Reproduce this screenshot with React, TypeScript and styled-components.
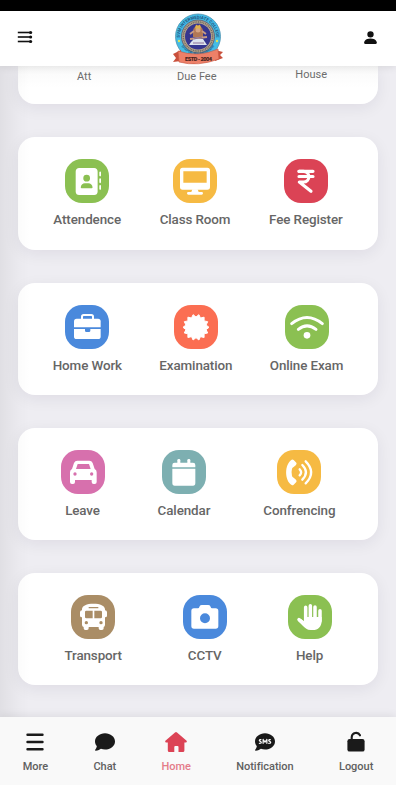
import React from "react";
import styled, { createGlobalStyle } from "styled-components";
import { FaAddressBook, FaComment, FaCommentSms } from "react-icons/fa6";
import { BsPersonFill } from "react-icons/bs";

const GlobalStyle = createGlobalStyle`
  * { box-sizing: border-box; }
  body { margin: 0; background: #fff; font-family: Roboto, "Liberation Sans", sans-serif; }
`;

const Screen = styled.div`
  position: relative;
  width: 396px;
  height: 785px;
  overflow: hidden;
  display: flex;
  flex-direction: column;
  background: #eeedf2;
`;

const EdgeShade = styled.div`
  position: absolute;
  inset: 11px auto 0 0;
  width: 30px;
  background: linear-gradient(90deg, rgba(0, 0, 0, 0.06), rgba(0, 0, 0, 0.015) 60%, transparent);
  pointer-events: none;
`;

const StatusBar = styled.div`
  height: 11px;
  flex: none;
  background: #000;
`;

const Header = styled.header`
  height: 55px;
  flex: none;
  display: grid;
  grid-template-columns: 1fr 52px 1fr;
  align-items: center;
  padding: 0 17px;
  background: #fff;
  box-shadow: 0 1px 8px rgba(0, 0, 0, 0.1);
  z-index: 1;
  color: #111;
`;

const HeaderStart = styled.div`
  display: flex;
  padding-bottom: 3px;
`;

const HeaderEnd = styled(HeaderStart)`
  justify-content: flex-end;
`;

const Main = styled.main`
  flex: 1;
  min-height: 0;
  display: flex;
  flex-direction: column;
  gap: 33px;
  padding: 0 18px;
`;

const Card = styled.section`
  height: 112.2px;
  flex: none;
  display: flex;
  justify-content: space-around;
  align-items: flex-start;
  padding: 22px 16px 0;
  border-radius: 17px;
  background: #fff;
  box-shadow: 0 4px 16px rgba(30, 20, 60, 0.07);
`;

const SummaryCard = styled(Card)`
  height: 38.4px;
  padding: 4px 51px 0 59px;
  justify-content: flex-start;
  border-radius: 0 0 17px 17px;
  background: linear-gradient(#f9f9f9, #fff 22px);
`;

const Summary = styled.span<{ $raised?: boolean }>`
  font-size: 11px;
  line-height: 14px;
  color: #6d6d6d;
  margin-top: ${(p) => (p.$raised ? -2 : 0)}px;
  & + & { margin-left: auto; }
  &:nth-child(2) { padding-left: 7px; }
`;

const Tile = styled.a`
  display: flex;
  flex-direction: column;
  align-items: center;
`;

const Badge = styled.span<{ $color: string }>`
  width: 44px;
  height: 44px;
  display: grid;
  place-items: center;
  border-radius: 17px;
  background: ${(p) => p.$color};
  color: #fff;
`;

const TileLabel = styled.span`
  margin-top: 8px;
  font-size: 13.4px;
  line-height: 17px;
  font-weight: 500;
  letter-spacing: -0.1px;
  color: #666;
  white-space: nowrap;
`;

const Nav = styled.nav`
  height: 68.5px;
  flex: none;
  display: flex;
  justify-content: space-around;
  background: #f9f9f9;
  box-shadow: 0 -2px 8px rgba(0, 0, 0, 0.07);
  z-index: 1;
`;

const NavItem = styled.a<{ $active?: boolean }>`
  display: flex;
  flex-direction: column;
  align-items: center;
  padding-top: 14px;
  color: ${(p) => (p.$active ? "#dc4355" : "#1a1a1a")};
`;

const NavIcon = styled.span`
  height: 22px;
  display: grid;
  place-items: center;
`;

const NavLabel = styled.span<{ $active?: boolean }>`
  margin-top: 7px;
  font-size: 11px;
  line-height: 14px;
  font-weight: 500;
  letter-spacing: -0.02px;
  color: ${(p) => (p.$active ? "#e47c89" : "#606060")};
`;

const MenuIcon = () => (
  <svg width="16" height="14" viewBox="0 0 16 14" fill="#111">
    {[2.5, 7, 11.5].map((y) => (
      <g key={y}>
        <rect x="0.8" y={y - 0.8} width="12" height="1.6" />
        <circle cx="13.6" cy={y} r="1.6" />
      </g>
    ))}
  </svg>
);

/* Badge artwork shares one 132-unit square, three units per pixel. */
const Art = ({ children }: { children: React.ReactNode }) => (
  <svg width="44" height="44" viewBox="0 0 132 132" fill="currentColor">{children}</svg>
);

const stroke = { fill: "none", stroke: "currentColor", strokeLinecap: "round", strokeLinejoin: "round" } as const;

const Desktop = () => (
  <Art>
    <path fillRule="evenodd" d="M29 26H103Q111 26 111 34V84Q111 92 103 92H29Q21 92 21 84V34Q21 26 29 26ZM31 37V71H101V37Z" />
    <path d="M58 91H74L77 99H86Q90 99 90 103Q90 107 86 107H46Q42 107 42 103Q42 99 46 99H55Z" />
  </Art>
);

const Rupee = () => (
  <Art>
    <g {...stroke} strokeWidth="9.5">
      <path d="M45 37H87M45 52.5H87" />
      <path d="M45 37H58C80 37 80 69 58 69H46L81 97" />
    </g>
  </Art>
);

const Briefcase = () => (
  <Art>
    <path {...stroke} strokeWidth="6" d="M51 43V35Q51 30 56 30H79Q84 30 84 35V43" />
    <path d="M35 41H99Q107 41 107 49V67H27V49Q27 41 35 41Z" />
    <path d="M27 72H60V77Q60 81 64 81H72Q76 81 76 77V72H107V95Q107 102 99 102H35Q27 102 27 95Z" />
  </Art>
);

const BURST = Array.from({ length: 28 }, (_, i) => {
  const r = i % 2 ? 31 : 39;
  const a = ((i + 1) * Math.PI) / 14;
  return `${(66 + r * Math.sin(a)).toFixed(2)},${(67 - r * Math.cos(a)).toFixed(2)}`;
}).join(" ");

const Burst = () => (
  <Art><polygon points={BURST} stroke="currentColor" strokeWidth="3" strokeLinejoin="round" /></Art>
);

const Wifi = () => (
  <Art>
    <path {...stroke} strokeWidth="9" d="M20 56Q66 19 112 56M40 73Q66 52 93 73" />
    <circle cx="66" cy="91" r="10" />
  </Art>
);

const Car = () => (
  <Art>
    <path fillRule="evenodd" d="M49 32H85Q92 32 95 39L101 57Q107 60 107 67V96Q107 102 101 102H98Q92 102 92 96V90H42V96Q42 102 36 102H33Q27 102 27 96V67Q27 60 33 57L39 39Q42 32 49 32ZM50 42L45 57H89L84 42ZM42 67A5 5 0 1 0 42 77A5 5 0 1 0 42 67ZM92 67A5 5 0 1 0 92 77A5 5 0 1 0 92 67Z" />
  </Art>
);

const Calendar = () => (
  <Art>
    <rect x="46" y="27" width="9" height="20" rx="4" />
    <rect x="76" y="27" width="9" height="20" rx="4" />
    <path d="M38 38H93Q100 38 100 45V52H31V45Q31 38 38 38ZM31 56H100V99Q100 107 93 107H38Q31 107 31 99Z" />
  </Art>
);

const PhoneVolume = () => (
  <Art>
    <path d="M44 29Q47 27 50 30L58 38Q60 41 57 45L50 51Q46 53 45 56Q42 67 45 78Q46 81 50 83L57 89Q60 93 58 96L50 104Q47 107 44 105C22 91 22 43 44 29Z" />
    <path {...stroke} strokeWidth="7" d="M68 58Q77 67 68 76M76 45Q98 67 76 89M86 34Q119 67 86 100" />
  </Art>
);

const Bus = () => (
  <Art>
    <path fillRule="evenodd" d="M67 26C88 26 101 32 102 42V46Q108 46 108 52V62Q108 67 102 67V89Q102 94 98 96V100Q98 105 93 105H88Q83 105 83 100V96H53V100Q53 105 48 105H43Q38 105 38 100V96Q33 94 33 89V67Q27 67 27 62V52Q27 46 33 46V42C34 32 47 26 67 26ZM53 36V40H82V36ZM46 47Q42 47 42 51V66Q42 70 46 70H65V47ZM70 47V70H89Q93 70 93 66V51Q93 47 89 47ZM46 78A5 5 0 1 0 46 88A5 5 0 1 0 46 78ZM90 78A5 5 0 1 0 90 88A5 5 0 1 0 90 78Z" />
  </Art>
);

const Camera = () => (
  <Art>
    <path fillRule="evenodd" d="M33 40H45Q48 40 49 36Q50 30 56 30H76Q82 30 83 36Q84 40 87 40H98Q106 40 106 48V93Q106 101 98 101H33Q25 101 25 93V48Q25 40 33 40ZM66 55A15 15 0 1 0 66 85A15 15 0 1 0 66 55Z" />
  </Art>
);

const Hand = () => (
  <Art>
    <path {...stroke} strokeWidth="10.5" d="M53 37V78M67 32V78M81 36V78M96 47V78M33 74L53 90" />
    <path d="M48 66H101V77C101 94 91 105 74 105H68C57 105 52 100 45 93L31 79L38 71L48 79Z" />
  </Art>
);

const Bars = () => (
  <svg width="20" height="20" viewBox="0 0 20 20">
    <path {...stroke} strokeWidth="2.4" d="M2.5 2.8H17.5M2.5 10H17.5M2.5 17.2H17.5" />
  </svg>
);

const House = () => (
  <svg width="22" height="22" viewBox="0 0 22 22" fill="currentColor">
    <path d="M10 1.4Q11 0.6 12 1.4L21.6 9.8Q22.3 11.4 20.8 11.5H19.4V19.5Q19.4 21 17.9 21H13.5V16Q13.5 15 12.5 15H10.3Q9.3 15 9.3 16V21H4.3Q2.8 21 2.8 19.5V11.5H1.2Q-0.3 11.4 0.4 9.8Z" />
  </svg>
);

const Unlock = () => (
  <svg width="20" height="22" viewBox="0 0 20 22" fill="currentColor">
    <rect x="1.4" y="8" width="17.2" height="12.6" rx="2.2" />
    <path {...stroke} strokeWidth="2.1" d="M5.7 9V6A4.4 4.4 0 0 1 14 4.3" />
  </svg>
);

const Crest = () => (
  <svg width="52" height="53" viewBox="0 0 52 53">
    <defs>
      <path id="arcTop" d="M8.7 31A18.3 18.3 0 1 1 43.3 31" />
      <path id="arcBottom" d="M8 32A20.5 20.5 0 0 0 44 32" />
    </defs>
    <circle cx="26" cy="24.5" r="22.5" fill="#43bce6" stroke="#4b91b0" strokeWidth="0.8" />
    <circle cx="26" cy="24.5" r="16.5" fill="#b5a58e" stroke="#5c5c70" strokeWidth="0.9" />
    <circle cx="26" cy="24.5" r="14.6" fill="none" stroke="#6d675e" strokeWidth="1.5" strokeDasharray="1 0.8" />
    <circle cx="26" cy="24.5" r="13" fill="#35368f" />
    <text fontSize="4.2" fontWeight="700" fill="#24507a">
      <textPath href="#arcTop" startOffset="50%" textAnchor="middle">SVM INTERMEDIATE COLLEGE</textPath>
    </text>
    <text fontSize="3.3" fontWeight="700" fill="#24608b">
      <textPath href="#arcBottom" startOffset="50%" textAnchor="middle">SHAPUR, BULANDSHAHR</textPath>
    </text>
    <path d="M21 25Q20 14 26 13Q32 14 31 25Z" fill="#b17855" />
    <path d="M18 22L22 19M34 22L30 19M18 27L35 25" stroke="#c79b83" strokeWidth="1.8" />
    <circle cx="26" cy="18" r="2.5" fill="#d7a583" />
    <path d="M23 16.5L24 12.5L26 14L28 12.5L29 16.5Z" fill="#dfb34b" />
    <path d="M19 30L22 27H31L33 30L35 33H17Z" fill="#dce3ee" />
    <path d="M22 27L30 25M21 31H32" stroke="#897197" strokeWidth="1.1" />
    <circle cx="7" cy="29" r="1.2" fill="#dce45b" />
    <circle cx="45" cy="29" r="1.2" fill="#dce45b" />
    <path d="M1 42L9 38V49L1 50L4 46ZM51 40L43 38V49L51 46L48 43Z" fill="#c9503c" />
    <path d="M6 39Q26 46 46 37L47 47Q26 55 7 50Z" fill="#ed8068" stroke="#c65541" strokeWidth="0.6" />
    <text x="26.5" y="49" textAnchor="middle" fontSize="5.7" fontWeight="900" textLength="27" fill="#46201b">ESTD - 2004</text>
  </svg>
);

type Item = { label: string; icon: React.ReactNode; color: string };

const ROWS: Item[][] = [
  [
    { label: "Attendence", icon: <FaAddressBook size={27} />, color: "#8bc052" },
    { label: "Class Room", icon: <Desktop />, color: "#f6ba43" },
    { label: "Fee Register", icon: <Rupee />, color: "#db4355" },
  ],
  [
    { label: "Home Work", icon: <Briefcase />, color: "#4a89dc" },
    { label: "Examination", icon: <Burst />, color: "#fb6e52" },
    { label: "Online Exam", icon: <Wifi />, color: "#8bc052" },
  ],
  [
    { label: "Leave", icon: <Car />, color: "#d770ad" },
    { label: "Calendar", icon: <Calendar />, color: "#7dafb1" },
    { label: "Confrencing", icon: <PhoneVolume />, color: "#f6ba43" },
  ],
  [
    { label: "Transport", icon: <Bus />, color: "#aa8d66" },
    { label: "CCTV", icon: <Camera />, color: "#4a89dc" },
    { label: "Help", icon: <Hand />, color: "#8bc052" },
  ],
];

const NAV = [
  { label: "More", icon: <Bars /> },
  { label: "Chat", icon: <FaComment size={20} /> },
  { label: "Home", icon: <House />, active: true },
  { label: "Notification", icon: <FaCommentSms size={20} /> },
  { label: "Logout", icon: <Unlock /> },
];

export default function App() {
  return (
    <>
      <GlobalStyle />
      <Screen>
        <StatusBar />
        <Header>
          <HeaderStart><MenuIcon /></HeaderStart>
          <Crest />
          <HeaderEnd><BsPersonFill size={17} /></HeaderEnd>
        </Header>
        <Main>
          <SummaryCard>
            <Summary>Att</Summary>
            <Summary>Due Fee</Summary>
            <Summary $raised>House</Summary>
          </SummaryCard>
          {ROWS.map((row, i) => (
            <Card key={i}>
              {row.map((t) => (
                <Tile key={t.label}>
                  <Badge $color={t.color}>{t.icon}</Badge>
                  <TileLabel>{t.label}</TileLabel>
                </Tile>
              ))}
            </Card>
          ))}
        </Main>
        <Nav>
          {NAV.map((n) => (
            <NavItem key={n.label} $active={n.active}>
              <NavIcon>{n.icon}</NavIcon>
              <NavLabel $active={n.active}>{n.label}</NavLabel>
            </NavItem>
          ))}
        </Nav>
        <EdgeShade />
      </Screen>
    </>
  );
}
